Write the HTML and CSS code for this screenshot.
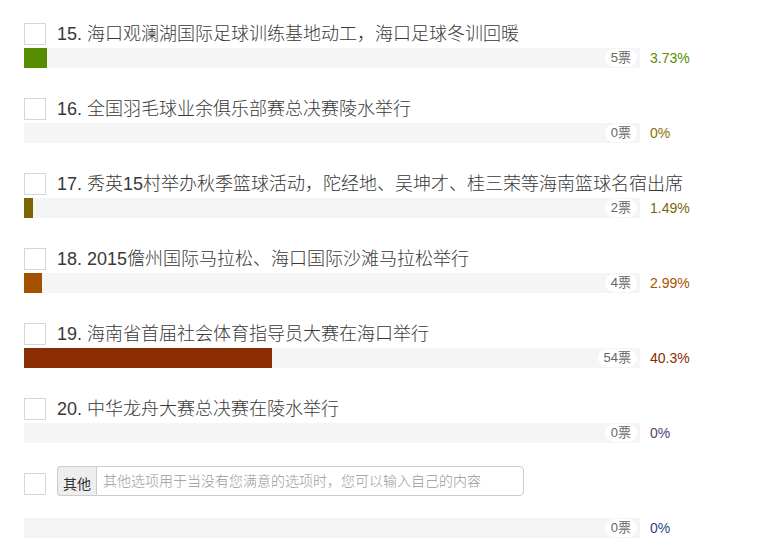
FILE: index.html
```html
<!DOCTYPE html>
<html lang="zh-CN">
<head>
    <meta charset="UTF-8">
    <meta name="viewport" content="width=device-width, initial-scale=1.0">
    <title>投票结果</title>
    <link rel="stylesheet" href="styles.css">
</head>
<body>
    <div class="poll">
        <div class="option">
            <div class="option-head">
                <span class="check"></span>
                <span class="label">15. 海口观澜湖国际足球训练基地动工，海口足球冬训回暖</span>
            </div>
            <div class="result">
                <div class="bar">
                    <div class="fill c-green" style="width: 3.73%"></div>
                    <span class="votes">5票</span>
                </div>
                <span class="percent t-green">3.73%</span>
            </div>
        </div>

        <div class="option">
            <div class="option-head">
                <span class="check"></span>
                <span class="label">16. 全国羽毛球业余俱乐部赛总决赛陵水举行</span>
            </div>
            <div class="result">
                <div class="bar">
                    <div class="fill" style="width: 0%"></div>
                    <span class="votes">0票</span>
                </div>
                <span class="percent t-gold">0%</span>
            </div>
        </div>

        <div class="option">
            <div class="option-head">
                <span class="check"></span>
                <span class="label">17. 秀英15村举办秋季篮球活动，陀经地、吴坤才、桂三荣等海南篮球名宿出席</span>
            </div>
            <div class="result">
                <div class="bar">
                    <div class="fill c-olive" style="width: 1.49%"></div>
                    <span class="votes">2票</span>
                </div>
                <span class="percent t-olive">1.49%</span>
            </div>
        </div>

        <div class="option">
            <div class="option-head">
                <span class="check"></span>
                <span class="label">18. 2015儋州国际马拉松、海口国际沙滩马拉松举行</span>
            </div>
            <div class="result">
                <div class="bar">
                    <div class="fill c-orange" style="width: 2.99%"></div>
                    <span class="votes">4票</span>
                </div>
                <span class="percent t-orange">2.99%</span>
            </div>
        </div>

        <div class="option">
            <div class="option-head">
                <span class="check"></span>
                <span class="label">19. 海南省首届社会体育指导员大赛在海口举行</span>
            </div>
            <div class="result">
                <div class="bar">
                    <div class="fill c-brown" style="width: 40.3%"></div>
                    <span class="votes">54票</span>
                </div>
                <span class="percent t-brown">40.3%</span>
            </div>
        </div>

        <div class="option">
            <div class="option-head">
                <span class="check"></span>
                <span class="label">20. 中华龙舟大赛总决赛在陵水举行</span>
            </div>
            <div class="result">
                <div class="bar">
                    <div class="fill" style="width: 0%"></div>
                    <span class="votes">0票</span>
                </div>
                <span class="percent t-purple">0%</span>
            </div>
        </div>

        <div class="option option-other">
            <div class="option-head">
                <span class="check"></span>
                <div class="input-group">
                    <span class="addon">其他</span>
                    <input type="text" placeholder="其他选项用于当没有您满意的选项时，您可以输入自己的内容">
                </div>
            </div>
            <div class="result">
                <div class="bar">
                    <div class="fill" style="width: 0%"></div>
                    <span class="votes">0票</span>
                </div>
                <span class="percent t-blue">0%</span>
            </div>
        </div>
    </div>
</body>
</html>
```

FILE: styles.css
```css
body {
    margin: 0;
    background-color: #ffffff;
    color: #333333;
    font-family: "Liberation Sans", "Noto Sans CJK SC", sans-serif;
}
.poll {
    padding: 23px 0 0 24px;
}
.option {
    margin-bottom: 30px;
}
.option-head {
    display: flex;
    align-items: center;
    height: 25px;
}
.check {
    box-sizing: border-box;
    width: 22px;
    height: 22px;
    margin-bottom: 3px;
    border: 1px solid #d6d6d6;
    background-color: #ffffff;
    flex-shrink: 0;
}
.label {
    margin-left: 11px;
    margin-bottom: 3px;
    font-size: 18px;
    font-weight: 300;
    line-height: 22px;
    color: #383838;
    white-space: nowrap;
}
.result {
    display: flex;
    align-items: center;
}
.bar {
    display: flex;
    align-items: center;
    justify-content: space-between;
    width: 616px;
    height: 20px;
    background-color: #f5f5f5;
}
.fill {
    height: 100%;
}
.votes {
    margin-right: 3px;
    padding: 0 6px;
    height: 18px;
    line-height: 18px;
    border-radius: 9px;
    background-color: #ffffff;
    color: #666666;
    font-size: 13px;
}
.percent {
    margin-left: 10px;
    font-size: 14px;
}
.c-green { background-color: #568c00; }
.c-olive { background-color: #7b6500; }
.c-orange { background-color: #a54f00; }
.c-brown { background-color: #8a2d00; }
.t-green { color: #5a8c00; }
.t-gold { color: #8c7000; }
.t-olive { color: #7d6608; }
.t-orange { color: #a65200; }
.t-brown { color: #8b2c00; }
.t-purple { color: #5c3d7a; }
.t-blue { color: #2c4a85; }

.option-other {
    margin-top: -7px;
}
.option-other .option-head {
    align-items: flex-start;
    height: 30px;
}
.option-other .check {
    margin-top: 7px;
    margin-bottom: 0;
}
.option-other .result {
    margin-top: 22px;
}
.input-group {
    display: flex;
    margin-left: 11px;
    width: 467px;
    height: 30px;
}
.addon {
    box-sizing: border-box;
    width: 39px;
    padding-top: 6px;
    text-align: center;
    font-size: 14px;
    color: #333333;
    background-color: #eeeeee;
    border: 1px solid #cccccc;
    border-right: none;
    border-radius: 4px 0 0 4px;
}
.input-group input {
    box-sizing: border-box;
    flex: 1;
    height: 30px;
    margin: 0;
    padding: 0 6px;
    font-family: "Liberation Sans", "Noto Sans CJK SC", sans-serif;
    font-size: 14px;
    font-weight: 300;
    color: #333333;
    border: 1px solid #cccccc;
    border-radius: 0 4px 4px 0;
    outline: none;
}
.input-group input::placeholder {
    color: #999999;
}
```
